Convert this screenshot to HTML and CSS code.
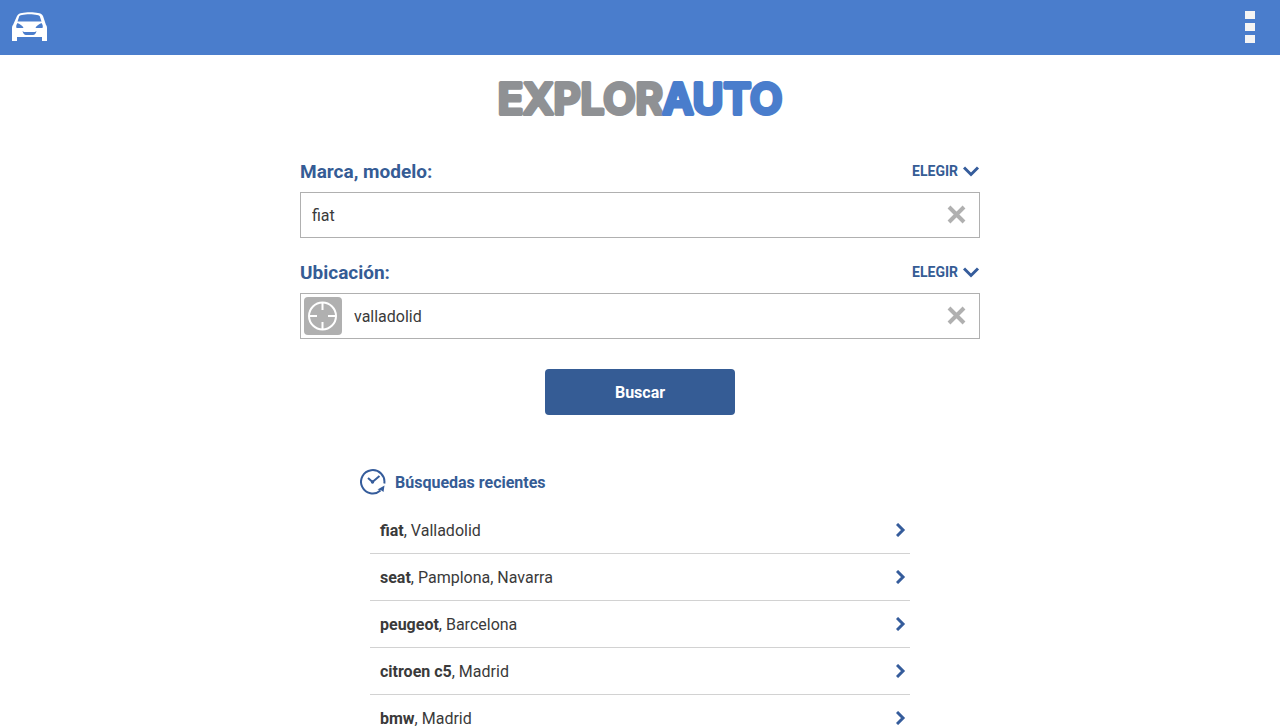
FILE: index.html
```
<!DOCTYPE html>
<html lang="es">

<head>
    <meta charset="UTF-8">
    <meta name="viewport" content="width=device-width, initial-scale=1.0">
    <title>Explorauto</title>
    <link rel="stylesheet" href="styles.css">
</head>

<body>

    <header class="topbar">
        <a href="#" class="home-link" aria-label="Inicio">
            <svg width="36" height="30" viewBox="0 0 36 30">
                <path fill="#fff" fill-rule="evenodd" d="M10 1C14 0 22 0 26 1C28 1 30 2 31 4L34 13C35 14 35 15 35 17V29H30V25H5V29H0V17C0 15 0 14 1 13L5 4C6 2 8 1 10 1ZM10 3C8 3 7 4 7 5L5.500 9.500H29.500L28 5C28 4 27 3 25 3C21 2 14 2 10 3ZM5.500 11C4 13 4 14.500 4.500 16H11.500C11 14 8 12 5.500 11ZM29.500 11C27 12 24 14 23.500 16H30.500C31 14.500 31 13 29.500 11ZM10.500 19C11 21.500 12.500 23 14 23H21C22.500 23 24 21.500 24.500 19L23 20H12Z"/>
            </svg>
        </a>
        <button type="button" class="menu-button" aria-label="Menú">
            <span></span>
            <span></span>
            <span></span>
        </button>
    </header>

    <main class="container">
        <h1 class="logo">
            <svg width="300" height="60" viewBox="0 0 300 60">
                <text x="150" y="45" text-anchor="middle"><tspan class="logo-gray">EXPLOR</tspan><tspan class="logo-blue">AUTO</tspan></text>
            </svg>
        </h1>

        <form class="search-form">
            <div class="field">
                <div class="field-head">
                    <label for="marca">Marca, modelo:</label>
                    <button type="button" class="choose">ELEGIR
                        <svg width="17" height="11" viewBox="0 0 17 11"><path d="M1 1.500L8 8.500L15 1.500"/></svg>
                    </button>
                </div>
                <div class="input-box">
                    <input type="text" id="marca" value="fiat">
                    <button type="button" class="clear" aria-label="Borrar">
                        <svg width="20" height="20" viewBox="0 0 20 20"><path d="M2 2L17 17M17 2L2 17"/></svg>
                    </button>
                </div>
            </div>

            <div class="field">
                <div class="field-head">
                    <label for="ubicacion">Ubicación:</label>
                    <button type="button" class="choose">ELEGIR
                        <svg width="17" height="11" viewBox="0 0 17 11"><path d="M1 1.500L8 8.500L15 1.500"/></svg>
                    </button>
                </div>
                <div class="input-box">
                    <button type="button" class="locate" aria-label="Localizar">
                        <svg width="30" height="30" viewBox="0 0 30 30"><circle cx="14.500" cy="15" r="13.500"/><path d="M14.500 2V9M14.500 21V28M2 15H9M20 15H27"/></svg>
                    </button>
                    <input type="text" id="ubicacion" value="valladolid">
                    <button type="button" class="clear" aria-label="Borrar">
                        <svg width="20" height="20" viewBox="0 0 20 20"><path d="M2 2L17 17M17 2L2 17"/></svg>
                    </button>
                </div>
            </div>

            <button type="submit" class="submit">Buscar</button>
        </form>

        <section class="recent">
            <h2>
                <svg width="26" height="26" viewBox="0 0 26 26">
                    <path class="line" d="M24.300 14.500A11.700 11.700 0 1 0 20.500 21.500M8 9L12.500 13L19.500 7"/>
                    <circle cx="12.500" cy="13" r="1.700"/>
                    <path d="M24.500 16.500L23.500 23L21.500 21.500L17.500 20.500Z"/>
                </svg>
                Búsquedas recientes
            </h2>
            <ul>
                <li><a href="#"><span><b>fiat</b>, Valladolid</span><svg width="10" height="14" viewBox="0 0 10 14"><path d="M1 1L7 7L1 13"/></svg></a></li>
                <li><a href="#"><span><b>seat</b>, Pamplona, Navarra</span><svg width="10" height="14" viewBox="0 0 10 14"><path d="M1 1L7 7L1 13"/></svg></a></li>
                <li><a href="#"><span><b>peugeot</b>, Barcelona</span><svg width="10" height="14" viewBox="0 0 10 14"><path d="M1 1L7 7L1 13"/></svg></a></li>
                <li><a href="#"><span><b>citroen c5</b>, Madrid</span><svg width="10" height="14" viewBox="0 0 10 14"><path d="M1 1L7 7L1 13"/></svg></a></li>
                <li><a href="#"><span><b>bmw</b>, Madrid</span><svg width="10" height="14" viewBox="0 0 10 14"><path d="M1 1L7 7L1 13"/></svg></a></li>
            </ul>
        </section>
    </main>

</body>

</html>
```
FILE: styles.css
```
* {
    box-sizing: border-box;
}

body {
    margin: 0;
    font-family: Roboto, sans-serif;
    font-size: 16px;
    color: #3a3a3a;
    background-color: #fff;
}

button {
    padding: 0;
    border: none;
    background: none;
    font-family: inherit;
    cursor: pointer;
}

svg {
    display: block;
}

.topbar {
    display: flex;
    justify-content: space-between;
    align-items: center;
    height: 55px;
    padding: 0 25px 1px 12px;
    background-color: #4a7dcc;
}

.menu-button {
    display: flex;
    flex-direction: column;
    gap: 4px;
}

.menu-button span {
    width: 10px;
    height: 8px;
    background-color: #f4f4f4;
}

.container {
    max-width: 680px;
    margin: 0 auto;
}

.logo {
    display: flex;
    justify-content: center;
    margin: 14px 0 28px;
}

.logo text {
    font-family: Inter, sans-serif;
    font-size: 42px;
    font-weight: 600;
    stroke-width: 4px;
    stroke-linejoin: round;
}

.logo-gray {
    fill: #8f9194;
    stroke: #8f9194;
}

.logo-blue {
    fill: #4a7dcc;
    stroke: #4a7dcc;
}

.field {
    margin-bottom: 20px;
}

.field-head {
    display: flex;
    justify-content: space-between;
    align-items: center;
    height: 28px;
    margin-bottom: 7px;
    color: #355c95;
}

.field-head label {
    font-size: 19px;
    font-weight: bold;
}

.choose {
    display: flex;
    align-items: center;
    gap: 5px;
    font-size: 14px;
    font-weight: bold;
    color: #355c95;
}

.choose svg,
.recent li svg {
    fill: none;
    stroke: #355c9b;
    stroke-width: 3px;
}

.input-box {
    display: flex;
    align-items: center;
    height: 46px;
    padding: 0 12px 0 3px;
    border: 1px solid #b0b0b0;
}

.input-box input {
    flex: 1;
    min-width: 0;
    height: 44px;
    padding: 0 8px;
    border: none;
    outline: none;
    background: none;
    font-family: inherit;
    font-size: 16px;
    color: #3a3a3a;
}

.clear svg {
    fill: none;
    stroke: #b0b0b0;
    stroke-width: 4px;
}

.locate {
    display: flex;
    justify-content: center;
    align-items: center;
    width: 38px;
    height: 38px;
    margin-right: 4px;
    border-radius: 4px;
    background-color: #b0b0b0;
}

.locate svg {
    fill: none;
    stroke: #fff;
    stroke-width: 2px;
}

.submit {
    display: block;
    width: 190px;
    height: 46px;
    margin: 30px auto 0;
    border-radius: 4px;
    background-color: #355c95;
    font-size: 16px;
    font-weight: bold;
    color: #fff;
}

.recent {
    margin: 54px 60px 0;
}

.recent h2 {
    display: flex;
    align-items: center;
    gap: 9px;
    height: 26px;
    margin: 0 0 12px;
    font-size: 16px;
    font-weight: bold;
    color: #355c95;
}

.recent h2 svg {
    fill: #355c9b;
}

.recent h2 .line {
    fill: none;
    stroke: #355c9b;
    stroke-width: 2px;
}

.recent ul {
    margin: 0 10px;
    padding: 0;
    list-style: none;
}

.recent li {
    border-bottom: 1px solid #d2d2d2;
}

.recent li a {
    display: flex;
    justify-content: space-between;
    align-items: center;
    height: 46px;
    padding: 0 4px 0 10px;
    color: #3a3a3a;
    text-decoration: none;
}
```
